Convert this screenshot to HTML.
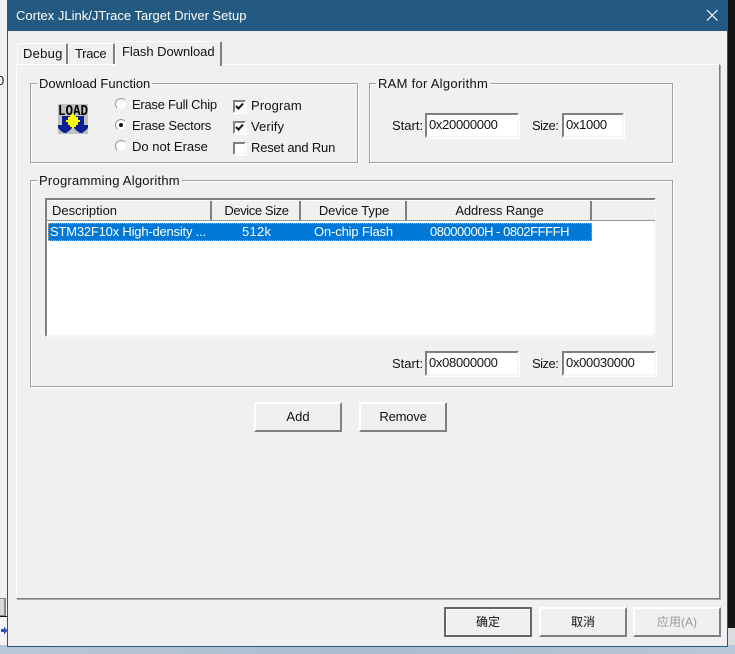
<!DOCTYPE html>
<html><head><meta charset="utf-8"><style>
*{box-sizing:border-box}
html,body{margin:0;padding:0}
body{width:735px;height:654px;position:relative;overflow:hidden;background:#e6e6e6;font:13px/16px "Liberation Sans","Noto Sans CJK SC",sans-serif;color:#111}
.a{position:absolute}
.t{position:absolute;white-space:nowrap;line-height:16px}
.g{position:absolute;border:1px solid #a0a0a0;box-shadow:1px 1px 0 #fff,inset 1px 1px 0 #fff}
.l{position:absolute;background:#f0f0f0;padding:0 2px;white-space:nowrap;line-height:16px;top:-8px;left:6px}
.in{position:absolute;height:25px;background:#fff;border:2px solid;border-color:#808080 #f6f6f6 #f6f6f6 #808080;box-shadow:1px 1px 0 #fff;padding:2px 0 0 2px;line-height:16px;letter-spacing:-.3px;white-space:nowrap;color:#111}
.b{position:absolute;height:30px;background:#f0f0f0;border:2px solid;border-color:#fff #808080 #808080 #fff;text-align:center;line-height:26px}
.cb{position:absolute;width:13px;height:13px;background:#fff;border:2px solid;border-color:#808080 #f8f8f8 #f8f8f8 #808080;box-shadow:1px 1px 0 #fff}
.rd{position:absolute;width:12px;height:12px;border-radius:50%;background:#fff;border:1.5px solid;border-color:#999 #eee #eee #999}
.tab{position:absolute;background:#f0f0f0;border:1px solid #fff;border-right:2px solid #808080;border-bottom:0;border-radius:2px 2px 0 0}
.h{position:absolute;top:201px;height:19px;background:#f0f0f0;border-right:2px solid #808080;text-align:center;line-height:19px;white-space:nowrap}
</style></head><body>
<!-- background scraps -->
<div class="a" style="left:0;top:0;width:7px;height:654px;background:#f0f0f0"></div>
<div class="t" style="left:-3px;top:73px;font-size:13px;color:#222">0</div>
<div class="a" style="left:0;top:598px;width:6px;height:18px;background:#d8d8d8;border:1px solid #888;border-left:0;border-right-width:2px"></div>
<div class="a" style="left:0;top:616px;width:7px;height:1px;background:#111"></div>
<div class="a" style="left:0;top:617px;width:7px;height:28px;background:#f4f4f4"></div>
<svg class="a" style="left:0;top:626px" width="8" height="9"><path d="M1 3h3V0.5L7.5 4.5 4 8.5V6H1z" fill="#2a4fc0"/></svg>
<div class="a" style="left:0;top:645px;width:735px;height:9px;background:linear-gradient(90deg,#b9c7d6,#a9bccf 50%,#b9c7d6)"></div>
<div class="a" style="left:728px;top:0;width:7px;height:628px;background:#141414"></div>
<div class="a" style="left:728px;top:628px;width:7px;height:17px;background:#d9dde2"></div>
<!-- window -->
<div class="a" style="left:7px;top:0;width:721px;height:647px;background:#f0f0f0;border:1px solid #245a82;border-top:0"></div>
<div class="a" style="left:7px;top:0;width:721px;height:31px;background:#245a82"></div>
<div class="t" style="left:16px;top:8px;color:#fff">Cortex JLink/JTrace Target Driver Setup</div>
<svg class="a" style="left:706px;top:9px" width="13" height="13"><path d="M1 1L11.5 11.5M11.5 1L1 11.5" stroke="#fff" stroke-width="1.2" fill="none"/></svg>
<!-- tab panel -->
<div class="a" style="left:16px;top:64px;width:704px;height:535px;background:#f0f0f0;border:1px solid;border-color:#fff #808080 #808080 #fff;box-shadow:1px 1px 0 #a8a8a8"></div>
<div class="tab" style="left:17px;top:43px;width:51px;height:21px"></div>
<div class="t" style="left:23px;top:46px;letter-spacing:.25px">Debug</div>
<div class="tab" style="left:68px;top:43px;width:47px;height:21px"></div>
<div class="t" style="left:75px;top:46px;letter-spacing:-.3px">Trace</div>
<div class="tab" style="left:115px;top:41px;width:107px;height:25px"></div>
<div class="t" style="left:122px;top:44px;letter-spacing:-.05px">Flash Download</div>
<!-- Download Function -->
<div class="g" style="left:30px;top:83px;width:328px;height:80px"><div class="l">Download Function</div></div>
<svg class="a" style="left:58px;top:104px" width="30" height="30">
<rect width="30" height="30" fill="#c0c0c0"/>
<text x="15" y="11" text-anchor="middle" font-family="Liberation Mono,monospace" font-weight="700" font-size="15" textLength="30" lengthAdjust="spacingAndGlyphs" fill="#000">LOAD</text>
<rect x="4" y="12" width="22" height="10" fill="#0a1f96"/>
<path d="M0 21H14V24L11 27 8 29H6L3 27 0 24Z" fill="#0a1f96"/>
<path d="M16 21H30V24L27 27 24 29H22L19 27 16 24Z" fill="#0a1f96"/>
<path d="M10 13h10v8H10zM12 11h6v12h-6zM8 16h14v2H8zM14 9.5h2v15h-2z" fill="#ffff00"/>
</svg>
<div class="rd" style="left:115px;top:98px"></div>
<div class="rd" style="left:115px;top:119px"></div>
<div class="a" style="left:119px;top:123px;width:4px;height:4px;border-radius:50%;background:#111"></div>
<div class="rd" style="left:115px;top:140px"></div>
<div class="t" style="left:132px;top:97px;letter-spacing:-.27px">Erase Full Chip</div>
<div class="t" style="left:132px;top:118px;letter-spacing:-.2px">Erase Sectors</div>
<div class="t" style="left:132px;top:139px">Do not Erase</div>
<div class="cb" style="left:233px;top:100px"></div>
<svg class="a" style="left:235px;top:102px" width="9" height="9"><path d="M1 4L3.5 6.5 8 1.5" stroke="#111" stroke-width="2" fill="none"/></svg>
<div class="cb" style="left:233px;top:121px"></div>
<svg class="a" style="left:235px;top:123px" width="9" height="9"><path d="M1 4L3.5 6.5 8 1.5" stroke="#111" stroke-width="2" fill="none"/></svg>
<div class="cb" style="left:233px;top:142px"></div>
<div class="t" style="left:251px;top:98px;letter-spacing:.15px">Program</div>
<div class="t" style="left:251px;top:119px;letter-spacing:.1px">Verify</div>
<div class="t" style="left:251px;top:140px;letter-spacing:-.2px">Reset and Run</div>
<!-- RAM -->
<div class="g" style="left:369px;top:83px;width:304px;height:80px"><div class="l" style="letter-spacing:.27px">RAM for Algorithm</div></div>
<div class="t" style="left:392px;top:118px">Start:</div>
<div class="in" style="left:425px;top:113px;width:94px">0x20000000</div>
<div class="t" style="left:532px;top:118px;letter-spacing:-.5px">Size:</div>
<div class="in" style="left:562px;top:113px;width:62px">0x1000</div>
<!-- Programming Algorithm -->
<div class="g" style="left:30px;top:180px;width:643px;height:207px"><div class="l" style="letter-spacing:.24px">Programming Algorithm</div></div>
<div class="a" style="left:45px;top:198px;width:611px;height:139px;background:#fff;border:2px solid;border-color:#808080 #f6f6f6 #f6f6f6 #808080"></div>
<div class="a" style="left:47px;top:200px;width:608px;height:21px;background:#f0f0f0;border-top:1px solid #fff;border-bottom:1px solid #999"></div>
<div class="h" style="left:47px;width:165px;text-align:left;padding-left:5px">Description</div>
<div class="h" style="left:212px;width:89px;letter-spacing:-.4px;padding-left:2px">Device Size</div>
<div class="h" style="left:301px;width:106px;letter-spacing:-.1px;padding-left:2px">Device Type</div>
<div class="h" style="left:407px;width:185px;letter-spacing:-.1px;padding-left:2px">Address Range</div>
<div class="a" style="left:48px;top:223px;width:544px;height:18px;background:#0078d7;outline:1px dotted #d9a060;outline-offset:-1px"></div>
<div class="t" style="left:50px;top:224px;color:#fff;letter-spacing:-.2px">STM32F10x High-density ...</div>
<div class="t" style="left:242px;top:224px;color:#fff;letter-spacing:.25px">512k</div>
<div class="t" style="left:314px;top:224px;color:#fff;letter-spacing:-.15px">On-chip Flash</div>
<div class="t" style="left:430px;top:224px;color:#fff;letter-spacing:-.47px">08000000H - 0802FFFFH</div>
<div class="t" style="left:392px;top:356px">Start:</div>
<div class="in" style="left:425px;top:351px;width:94px">0x08000000</div>
<div class="t" style="left:532px;top:356px;letter-spacing:-.5px">Size:</div>
<div class="in" style="left:562px;top:351px;width:94px">0x00030000</div>
<div class="b" style="left:254px;top:402px;width:88px">Add</div>
<div class="b" style="left:359px;top:402px;width:88px;letter-spacing:-.2px">Remove</div>
<!-- bottom -->
<div class="b" style="left:444px;top:607px;width:88px;font-size:12px;border-color:#666;box-shadow:inset 1px 1px 0 #fff">确定</div>
<div class="b" style="left:539px;top:607px;width:88px;font-size:12px">取消</div>
<div class="b" style="left:633px;top:607px;width:88px;font-size:12px;color:#9a9a9a">应用(A)</div>
</body></html>
